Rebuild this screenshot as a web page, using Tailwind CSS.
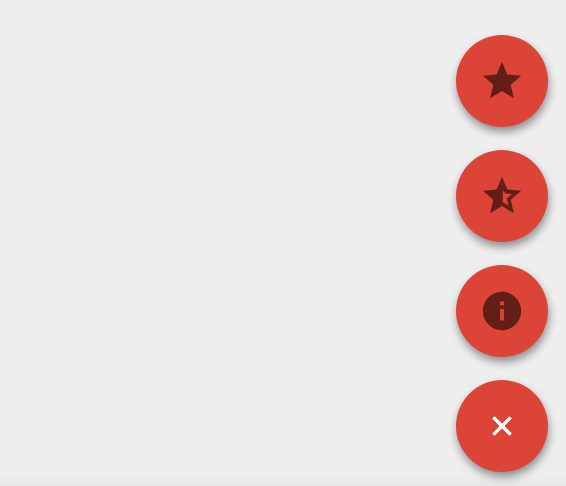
<!DOCTYPE html>
<html>
	<head>
		<meta charset="UTF-8" />
		<meta name="viewport" content="width=device-width, initial-scale=1.0" />
		<title>Floating actions</title>
		<script src="https://cdn.jsdelivr.net/npm/@tailwindcss/browser@4"></script>
	</head>
	<body class="bg-[#eeeeee] overflow-hidden">
		<main class="h-[486px] flex flex-col items-end gap-[23px] pt-[35px] pr-[18px] bg-linear-to-t from-[#e6e6e6] to-[#eeeeee] to-[10px]">
			<button class="w-[92px] h-[92px] rounded-full bg-[#db4437] flex items-center justify-center shadow-[1px_5px_8px_rgba(0,0,0,0.4)]">
				<svg class="w-[46px] h-[46px] fill-black/55" viewBox="0 0 24 24"><path d="M12 17.27 18.18 21l-1.64-7.03L22 9.24l-7.19-.61L12 2 9.19 8.63 2 9.24l5.46 4.73L5.82 21z" /></svg>
			</button>
			<button class="w-[92px] h-[92px] rounded-full bg-[#db4437] flex items-center justify-center shadow-[1px_5px_8px_rgba(0,0,0,0.4)]">
				<svg class="w-[46px] h-[46px] fill-black/55" viewBox="0 0 24 24"><path fill-rule="evenodd" d="M22 9.24l-7.19-.62L12 2 9.19 8.63 2 9.24l5.46 4.73L5.82 21 12 17.27 18.18 21l-1.63-7.03L22 9.24zM12.4 9.2v6l3 1.7-.9-3.6 2.7-2.3-3.3-.3z" /></svg>
			</button>
			<button class="w-[92px] h-[92px] rounded-full bg-[#db4437] flex items-center justify-center shadow-[1px_5px_8px_rgba(0,0,0,0.4)]">
				<svg class="w-[46px] h-[46px] fill-black/55" viewBox="0 0 24 24"><path d="M12 2C6.48 2 2 6.48 2 12s4.48 10 10 10 10-4.48 10-10S17.52 2 12 2zm1 15h-2v-6h2v6zm0-8h-2V7h2v2z" /></svg>
			</button>
			<button class="w-[92px] h-[92px] rounded-full bg-[#db4437] flex items-center justify-center shadow-[1px_5px_8px_rgba(0,0,0,0.4)]">
				<svg class="w-[32px] h-[32px] fill-white stroke-white stroke-[0.7]" viewBox="0 0 24 24"><path d="M19 6.41 17.59 5 12 10.59 6.41 5 5 6.41 10.59 12 5 17.59 6.41 19 12 13.41 17.59 19 19 17.59 13.41 12z" /></svg>
			</button>
		</main>
	</body>
</html>
